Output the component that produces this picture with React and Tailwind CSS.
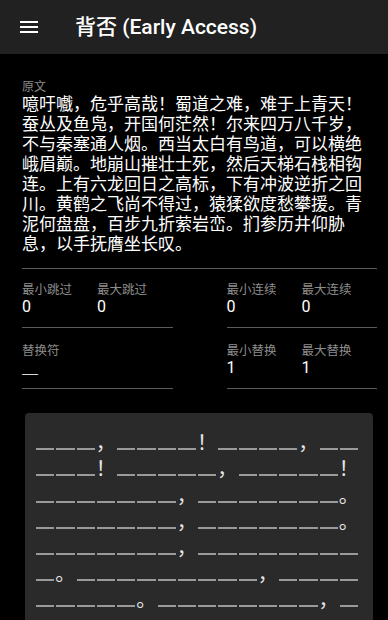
import React from "react";

const POEM =
  "噫吁嚱，危乎高哉！蜀道之难，难于上青天！蚕丛及鱼凫，开国何茫然！尔来四万八千岁，不与秦塞通人烟。西当太白有鸟道，可以横绝峨眉巅。地崩山摧壮士死，然后天梯石栈相钩连。上有六龙回日之高标，下有冲波逆折之回川。黄鹤之飞尚不得过，猿猱欲度愁攀援。青泥何盘盘，百步九折萦岩峦。扪参历井仰胁息，以手抚膺坐长叹。";

const PUNCT = "，！。";
const FONT = { fontFamily: "Roboto, 'Noto Sans CJK SC', sans-serif" };

function chunk(str, n) {
  const chars = Array.from(str);
  const rows = [];
  for (let i = 0; i < chars.length; i += n) rows.push(chars.slice(i, i + n));
  return rows;
}

function Field({ label, value }) {
  return (
    <div className="flex flex-col">
      <span className="text-[12.5px] leading-[14px] text-[#8c8c8c]">{label}</span>
      <span className="text-[16px] leading-[20px] text-white">{value}</span>
    </div>
  );
}

function FieldGroup({ items }) {
  return (
    <div className="flex gap-[25px] border-b border-[#5a5a5a] pb-[10px]">
      {items.map((it) => (
        <div key={it.label} className="w-[50px]">
          <Field label={it.label} value={it.value} />
        </div>
      ))}
    </div>
  );
}

export default function App() {
  const rows = chunk(POEM, 16).slice(0, 7);
  return (
    <div className="min-h-[620px] bg-black" style={FONT}>
      <header className="flex h-[54px] items-center bg-[#212121]">
        <div className="ml-[17px] flex h-[24px] w-[24px] items-center justify-center">
          <svg width="24" height="24" viewBox="0 0 24 24">
            <path d="M3 18h18v-2H3v2zm0-5h18v-2H3v2zm0-7v2h18V6H3z" fill="#ffffff" />
          </svg>
        </div>
        <h1 className="ml-[34px] text-[21px] font-medium leading-none text-white">背否 (Early Access)</h1>
      </header>

      <main className="pl-[22px] pr-[11px] pt-[26px]">
        <div className="border-b border-[#5a5a5a] pb-[14px]">
          <div className="text-[12px] leading-[14px] text-[#8c8c8c]">原文</div>
          <p className="text-[17px] leading-[20px] text-white">{POEM}</p>
        </div>

        <div className="grid grid-cols-2 gap-x-[54px] pt-[14px]">
          <FieldGroup
            items={[
              { label: "最小跳过", value: "0" },
              { label: "最大跳过", value: "0" },
            ]}
          />
          <FieldGroup
            items={[
              { label: "最小连续", value: "0" },
              { label: "最大连续", value: "0" },
            ]}
          />
          <div className="mt-[16px] border-b border-[#5a5a5a] pb-[10px]">
            <span className="block text-[12.5px] leading-[14px] text-[#8c8c8c]">替换符</span>
            <span className="block text-[16px] leading-[20px] text-white">＿</span>
          </div>
          <div className="mt-[16px]">
            <FieldGroup
              items={[
                { label: "最小替换", value: "1" },
                { label: "最大替换", value: "1" },
              ]}
            />
          </div>
        </div>

        <div className="ml-[3px] mt-[24px] w-[348px] rounded-[4px] bg-[#2a2a2a] pb-[20px] pl-[10px] pt-[17px]">
          {rows.map((row, i) => (
            <div key={i} className="flex h-[26.2px]">
              {row.map((ch, j) =>
                PUNCT.includes(ch) ? (
                  <div
                    key={j}
                    className="flex h-full w-[20.25px] items-end pb-[3px] text-[20px] leading-[22px] text-[#e6e6e6]"
                    style={{ fontFamily: "'Noto Sans CJK SC', sans-serif" }}
                  >
                    {ch}
                  </div>
                ) : (
                  <div key={j} className="flex h-full w-[20.25px] items-end pb-[6px]">
                    <div className="mx-[1px] h-[2px] w-full bg-[#9a9a9a]" />
                  </div>
                )
              )}
            </div>
          ))}
        </div>
      </main>
    </div>
  );
}
